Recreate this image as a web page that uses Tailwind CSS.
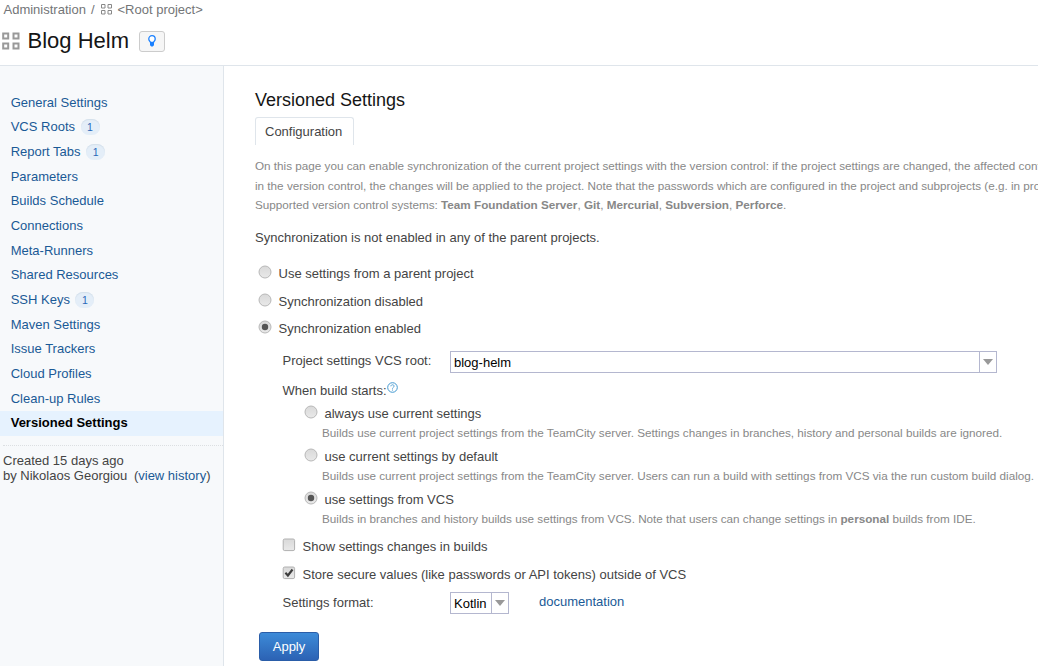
<!DOCTYPE html>
<html lang="en">
<head>
<meta charset="utf-8">
<title>Versioned Settings</title>
<script src="https://cdn.jsdelivr.net/npm/@tailwindcss/browser@4"></script>
</head>
<body class="flex h-[666px] w-[1038px] flex-col overflow-hidden bg-white font-['Liberation_Sans',Arial,sans-serif] text-[13px] leading-[16px] text-[#444]">
<svg class="absolute h-0 w-0">
  <defs>
    <linearGradient id="ctl" x1="0" y1="0" x2="0" y2="1"><stop offset="0" stop-color="#d9d9d9"/><stop offset="1" stop-color="#e9e9e9"/></linearGradient>
  </defs>
  <symbol id="grid" viewBox="0 0 18 18"><path fill="none" stroke="currentColor" stroke-width="2" d="M1.2 1.5h5v5h-5zM11.5 1.5h5v5h-5zM1.2 11.5h5v5h-5zM11.5 11.5h5v5h-5z"/></symbol>
  <symbol id="radio" viewBox="0 0 14 14"><circle cx="7" cy="7" r="6" fill="url(#ctl)" stroke="#b8b8b8"/></symbol>
  <symbol id="radio-on" viewBox="0 0 14 14"><circle cx="7" cy="7" r="6" fill="url(#ctl)" stroke="#b8b8b8"/><circle cx="7" cy="7" r="3.2" fill="#555"/></symbol>
  <symbol id="box" viewBox="0 0 14 14"><rect x="1.2" y="1" width="11.4" height="11.6" rx="1.5" fill="url(#ctl)" stroke="#b0b0b0"/></symbol>
  <symbol id="box-on" viewBox="0 0 14 14"><rect x="1.2" y="1" width="11.4" height="11.6" rx="1.5" fill="url(#ctl)" stroke="#b0b0b0"/><path d="M3.4 6.8l2.5 2.7 4.6-6" fill="none" stroke="#3c3c3c" stroke-width="2.1"/></symbol>
</svg>

<header class="h-[66px] shrink-0 border-b border-[#dfe5eb]">
  <div class="flex h-[19px] items-center pl-[3.5px] text-[#737577]">
    <span>Administration</span><span class="ml-[5px]">/</span>
    <svg class="mr-[5.5px] ml-[6.5px] h-[11px] w-[11px] text-[#888]" viewBox="0 0 11 11"><path fill="none" stroke="currentColor" d="M.5.5h3.500v3.500h-3.500zM7 .5h3.500v3.500h-3.500zM.5 6.500h3.500v3.500h-3.500zM7 6.500h3.500v3.500h-3.500z"/></svg>
    <span>&lt;Root project&gt;</span>
  </div>
  <div class="flex h-[43px] items-center pl-[2px]">
    <svg class="h-[18px] w-[18px] text-[#999]"><use href="#grid"/></svg>
    <h1 class="ml-[7.5px] w-[102px] text-[22px] leading-[26px] whitespace-nowrap text-[#151515]">Blog Helm</h1>
    <span class="mt-px ml-[9.5px] flex h-[21px] w-[26px] items-center justify-center rounded-[3px] border border-[#ccc] bg-[#f6f6f6]">
      <svg class="h-[12px] w-[8px]" viewBox="0 0 8 12"><path d="M2.600 7.800C2.400 6.600.8 5.900.8 3.900a3.200 3.200 0 0 1 6.400 0C7.200 5.900 5.600 6.600 5.400 7.800z" fill="#fff" stroke="#1a80ff" stroke-width="1.300"/><path d="M2 6.700h4v3.500L4.700 11.500H3.300L2 10.200z" fill="#1a80ff"/></svg>
    </span>
  </div>
</header>

<div class="flex min-h-0 flex-1">
  <aside class="w-[224px] shrink-0 border-r border-[#dfe5eb] bg-[#f7f9fb] pt-[24.18px]">
    <nav class="text-[#1a5a96] *:flex *:h-[24.68px] *:items-center *:pl-[10.7px]">
      <a>General Settings</a>
      <a>VCS Roots<span class="ml-[5.5px] flex h-[16px] w-[19px] items-center justify-center rounded-full bg-[#e4eef8] text-[10.5px] text-[#2a68b8] shadow-[inset_0_1px_1px_#d3dfea]">1</span></a>
      <a>Report Tabs<span class="ml-[5.5px] flex h-[16px] w-[19px] items-center justify-center rounded-full bg-[#e4eef8] text-[10.5px] text-[#2a68b8] shadow-[inset_0_1px_1px_#d3dfea]">1</span></a>
      <a>Parameters</a>
      <a>Builds Schedule</a>
      <a>Connections</a>
      <a>Meta-Runners</a>
      <a>Shared Resources</a>
      <a>SSH Keys<span class="ml-[5.5px] flex h-[16px] w-[19px] items-center justify-center rounded-full bg-[#e4eef8] text-[10.5px] text-[#2a68b8] shadow-[inset_0_1px_1px_#d3dfea]">1</span></a>
      <a>Maven Settings</a>
      <a>Issue Trackers</a>
      <a>Cloud Profiles</a>
      <a>Clean-up Rules</a>
      <a class="bg-[#e6f2fe] font-bold text-black">Versioned Settings</a>
    </nav>
    <div class="mt-[9px] ml-[3px] border-t border-dotted border-[#dcdfe2] pt-[7px] leading-[15.5px]">
      <div>Created 15 days ago</div>
      <div class="whitespace-nowrap">by Nikolaos Georgiou <span class="ml-[3px]">(<a class="text-[#1a5a96]">view history</a>)</span></div>
    </div>
  </aside>

  <main class="min-w-0 flex-1 overflow-hidden pl-[31px]">
    <h2 class="mt-[23px] text-[18px] leading-[22px] text-[#151515]">Versioned Settings</h2>
    <div class="mt-[6px] flex h-[28px] w-[99px] items-center rounded-t-[3px] border border-b-0 border-[#dfe5eb] pl-[9px]">Configuration</div>

    <div class="mt-[11px] text-[11.71px] leading-[19.5px] whitespace-nowrap text-[#888]">
      <p>On this page you can enable synchronization of the current project settings with the version control: if the project settings are changed, the affected conf</p>
      <p>in the version control, the changes will be applied to the project. Note that the passwords which are configured in the project and subprojects (e.g. in pro</p>
      <p>Supported version control systems: <b>Team Foundation Server</b>, <b>Git</b>, <b>Mercurial</b>, <b>Subversion</b>, <b>Perforce</b>.</p>
    </div>

    <p class="mt-[15px]">Synchronization is not enabled in any of the parent projects.</p>

    <div class="mt-[15px] pl-[3px] *:flex *:h-[27.5px] *:items-center">
      <label><svg class="mr-[6.5px] mb-[4px] h-[14px] w-[14px]"><use href="#radio"/></svg>Use settings from a parent project</label>
      <label><svg class="mr-[6.5px] mb-[4px] h-[14px] w-[14px]"><use href="#radio"/></svg>Synchronization disabled</label>
      <label><svg class="mr-[6.5px] mb-[4px] h-[14px] w-[14px]"><use href="#radio-on"/></svg>Synchronization enabled</label>
    </div>

    <div class="pl-[27.5px]">
      <div class="mt-[8px] flex h-[22px]">
        <span class="mt-[2px] w-[167.5px]">Project settings VCS root:</span>
        <div class="flex h-[22px] w-[547px] border border-[#b4b7cf] text-black">
          <span class="flex-1 self-center pt-[2px] pl-[3px]">blog-helm</span>
          <span class="flex w-[17px] items-center justify-center border-l border-[#b4b7cf]"><svg class="h-[6px] w-[10px]" viewBox="0 0 10 6"><path d="M0 0h10L5 6z" fill="#999"/></svg></span>
        </div>
      </div>
      <div class="mt-[10px] flex h-[16px]">When build starts:<svg class="-mt-px h-[11px] w-[11px]" viewBox="0 0 11 11"><circle cx="5.500" cy="5.500" r="4.800" fill="none" stroke="#4398d0"/><path d="M3.900 4.300C3.900 2.200 7.100 2.300 7.100 4.200 7.100 5.300 5.500 5.300 5.500 6.700M5.500 7.500v1.100" fill="none" stroke="#4398d0" stroke-width=".9"/></svg></div>

      <div class="mt-[5px] pl-[21.5px]">
        <div class="h-[43px]">
          <label class="flex h-[20px] items-center"><svg class="mr-[6.5px] mb-[4px] h-[14px] w-[14px]"><use href="#radio"/></svg>always use current settings</label>
          <p class="pl-[18px] text-[11.71px] leading-[17px] whitespace-nowrap text-[#888]">Builds use current project settings from the TeamCity server. Settings changes in branches, history and personal builds are ignored.</p>
        </div>
        <div class="h-[43px]">
          <label class="flex h-[20px] items-center"><svg class="mr-[6.5px] mb-[4px] h-[14px] w-[14px]"><use href="#radio"/></svg>use current settings by default</label>
          <p class="pl-[18px] text-[11.71px] leading-[17px] whitespace-nowrap text-[#888]">Builds use current project settings from the TeamCity server. Users can run a build with settings from VCS via the run custom build dialog.</p>
        </div>
        <div class="h-[43px]">
          <label class="flex h-[20px] items-center"><svg class="mr-[6.5px] mb-[4px] h-[14px] w-[14px]"><use href="#radio-on"/></svg>use settings from VCS</label>
          <p class="pl-[18px] text-[11.71px] leading-[17px] whitespace-nowrap text-[#888]">Builds in branches and history builds use settings from VCS. Note that users can change settings in <b>personal</b> builds from IDE.</p>
        </div>
      </div>

      <label class="flex h-[28px] items-center"><svg class="mr-[7px] -ml-[1px] mb-[4px] h-[14px] w-[14px]"><use href="#box"/></svg>Show settings changes in builds</label>
      <label class="flex h-[28px] items-center"><svg class="mr-[7px] -ml-[1px] mb-[5px] h-[14px] w-[14px]"><use href="#box-on"/></svg>Store secure values (like passwords or API tokens) outside of VCS</label>

      <div class="mt-[3px] flex h-[22px]">
        <span class="mt-[3px] w-[167.5px]">Settings format:</span>
        <div class="flex h-[22px] w-[59px] border border-[#b4b7cf] text-black">
          <span class="flex-1 self-center pt-[2px] pl-[3px]">Kotlin</span>
          <span class="flex w-[17px] items-center justify-center border-l border-[#b4b7cf]"><svg class="h-[6px] w-[10px]" viewBox="0 0 10 6"><path d="M0 0h10L5 6z" fill="#999"/></svg></span>
        </div>
        <a class="mt-[2px] ml-[30px] text-[#1a5a96]">documentation</a>
      </div>
    </div>

    <button class="mt-[18px] ml-[4px] h-[29px] w-[60px] rounded-[3px] border border-[#2a5da8] bg-linear-to-b from-[#3d8bd8] to-[#2c62b4] text-white">Apply</button>
  </main>
</div>
</body>
</html>
